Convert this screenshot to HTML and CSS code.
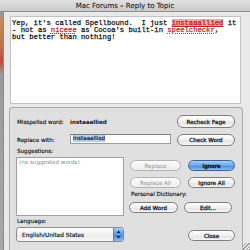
FILE: index.html
```html
<!DOCTYPE html>
<html>
<head>
<meta charset="utf-8">
<link rel="stylesheet" href="styles.css">
</head>
<body>
<div class="screen">
  <div class="titlebar">Mac Forums – Reply to Topic</div>
  <div class="main">
    <div class="edge"></div>
    <div class="window">
      <div class="editor">
        <div class="line">Yep, it's called Spellbound.  I just <span class="bad cur">instaaallied</span> it</div>
        <div class="line">- not as <span class="bad">niceee</span> as Cocoa's built-in <span class="bad">speelcheckr</span>,</div>
        <div class="line">but better than nothing!</div>
      </div>
      <div class="panel">
        <div class="row r1">
          <div class="label"><span class="lab-w">Misspelled word:</span><b class="word">instaaallied</b></div>
          <div class="btn w58">Recheck Page</div>
        </div>
        <div class="row r2">
          <div class="label"><span class="lab-w">Replace with:</span><span class="field"><span class="sel">instaaallied</span></span></div>
          <div class="btn w58">Check Word</div>
        </div>
        <div class="caption">Suggestions:</div>
        <div class="lower">
          <div class="leftcol">
            <div class="list">(no suggested words)</div>
            <div class="caption">Language:</div>
            <div class="popup">
              <span class="popup-text">English/United States</span>
              <span class="arrows"><svg width="9" height="13" viewBox="0 0 9 13"><path d="M2.5 5 L4.5 2.5 L6.5 5 Z" fill="#10204a"/><path d="M2.5 8 L4.5 10.5 L6.5 8 Z" fill="#10204a"/></svg></span>
            </div>
          </div>
          <div class="rightcol">
            <div class="brow">
              <div class="btn off w51">Replace</div>
              <div class="btn blue w47">Ignore</div>
            </div>
            <div class="brow gap">
              <div class="btn off w51">Replace All</div>
              <div class="btn w47">Ignore All</div>
            </div>
            <div class="caption dict">Personal Dictionary:</div>
            <div class="brow tight">
              <div class="btn w49">Add Word</div>
              <div class="btn w48">Edit...</div>
            </div>
            <div class="brow end">
              <div class="btn w47">Close</div>
            </div>
          </div>
        </div>
      </div>
    </div>
  </div>
  <div class="grip"></div>
</div>
</body>
</html>
```

FILE: styles.css
```css
html, body {
  margin: 0;
  padding: 0;
}
body {
  width: 250px;
  height: 250px;
  overflow: hidden;
  font-family: "Lucida Grande", "DejaVu Sans", sans-serif;
  color: #111;
}
.screen {
  position: relative;
  width: 250px;
  height: 250px;
  overflow: hidden;
  display: flex;
  flex-direction: column;
  background: #e6e6e6;
}
.titlebar {
  height: 12px;
  line-height: 12px;
  font-size: 7px;
  text-align: center;
  color: #1a1a1a;
  background: linear-gradient(#e2e2e2, #c9c9c9);
  border-bottom: 1px solid #8f8f8f;
  box-sizing: border-box;
  flex: none;
  -webkit-text-stroke: 0.1px #1a1a1a;
}
.main {
  flex: 1;
  display: flex;
  min-height: 0;
}
.edge {
  width: 3px;
  flex: none;
  background: linear-gradient(#9b9b9b 0, #c98a55 10px, #b8734a 35px, #c04a3a 50px, #9a9a9a 62px, #a8a8a8 100%);
  border-right: 1px solid #8a8a8a;
}
.window {
  flex: 1;
  display: flex;
  flex-direction: column;
  padding: 4px 9px 0 6px;
  background: #e9e9e9;
  min-width: 0;
}
.editor {
  height: 88px;
  box-sizing: border-box;
  background: #fff;
  border: 1px solid #c2c2c2;
  padding: 3px 0 0 1px;
  font-family: "Liberation Mono", "Courier New", monospace;
  font-size: 7.2px;
  line-height: 7px;
  color: #111;
  flex: none;
  -webkit-text-stroke: 0.25px #111;
}
.line {
  white-space: pre;
}
.bad {
  color: #c0202a;
  -webkit-text-stroke-color: #c0202a;
  text-decoration: underline dotted #d03030;
}
.bad.cur {
  background: #f2a5a5;
  text-decoration: underline solid #c02020;
}
.panel {
  flex: 1;
  margin: 3px -2px 0 -1px;
  border: 1px solid #a9a9a9;
  border-bottom: none;
  border-radius: 4px 4px 0 0;
  background: #e0e0e0;
  padding: 7px 7px 0 6px;
  font-size: 5.6px;
  -webkit-text-stroke: 0.15px currentColor;
}
.row {
  display: flex;
  align-items: center;
  justify-content: space-between;
}
.r1 {
  height: 13px;
}
.r2 {
  height: 12px;
  margin-top: 6px;
}
.label {
  display: flex;
  align-items: center;
  padding-left: 1px;
}
.lab-w {
  width: 53px;
  flex: none;
}
.word {
  font-weight: bold;
  -webkit-text-stroke: 0;
}
.field {
  width: 101px;
  height: 10px;
  box-sizing: border-box;
  background: #fff;
  border: 1px solid #9c9c9c;
  border-top-color: #7c7c7c;
  display: flex;
  align-items: center;
  padding-left: 2px;
  margin-top: -3px;
}
.sel {
  background: #b4d0f6;
  line-height: 7px;
}
.caption {
  height: 11px;
  line-height: 11px;
  padding-left: 1px;
}
.lower {
  display: grid;
  grid-template-columns: 108px 1fr;
  column-gap: 6px;
}
.list {
  height: 59px;
  box-sizing: border-box;
  background: #fff;
  border: 1px solid #9f9f9f;
  color: #8a8a8a;
  padding: 1px 2px;
  line-height: 7px;
  -webkit-text-stroke: 0;
}
.popup {
  height: 15px;
  box-sizing: border-box;
  border: 1px solid #8d8d8d;
  border-radius: 3px;
  background: linear-gradient(#ffffff, #ececec 60%, #f6f6f6);
  display: flex;
  align-items: center;
  justify-content: space-between;
  overflow: hidden;
}
.popup-text {
  padding-left: 5px;
  font-size: 5.8px;
}
.arrows {
  width: 9px;
  height: 13px;
  background: linear-gradient(#a9cdf4, #5d9ae4 50%, #3f84db 51%, #8cc0f2);
  border-left: 1px solid #5b7fb5;
  display: flex;
}
.rightcol {
  padding-top: 3px;
}
.brow {
  display: flex;
  justify-content: space-between;
}
.brow.gap {
  margin-top: 6px;
}
.brow.tight {
  justify-content: flex-start;
  gap: 6px;
  margin-left: -1px;
}
.brow.end {
  justify-content: flex-end;
  margin-top: 17px;
}
.dict {
  height: 14px;
  line-height: 12px;
}
.btn {
  height: 11px;
  box-sizing: border-box;
  border: 1px solid #7e7e7e;
  border-radius: 6px;
  background: linear-gradient(#ffffff, #f0f0f0 50%, #e2e2e2 51%, #f6f6f6);
  display: flex;
  align-items: center;
  justify-content: center;
  font-size: 5.6px;
  color: #111;
  -webkit-text-stroke: 0.25px #111;
}
.r1 .btn {
  height: 13px;
}
.r2 .btn {
  height: 12px;
}
.btn.off {
  border-color: #b3b3b3;
  color: #a4a4a4;
  -webkit-text-stroke: 0.1px #a4a4a4;
  background: linear-gradient(#fbfbfb, #eeeeee);
}
.btn.blue {
  border-color: #3d5f96;
  background: linear-gradient(#a8cef6, #6aa6ec 50%, #3f86e0 51%, #8bc2f6);
  -webkit-text-stroke: 0.35px #0a0a0a;
  color: #0a0a0a;
}
.w58 { width: 58px; }
.w51 { width: 51px; }
.w47 { width: 47px; }
.w49 { width: 49px; }
.w48 { width: 48px; }
.grip {
  position: absolute;
  right: 0;
  bottom: 0;
  width: 7px;
  height: 7px;
  background: repeating-linear-gradient(135deg, transparent 0 1.5px, #9a9a9a 1.5px 2.5px);
}
```
